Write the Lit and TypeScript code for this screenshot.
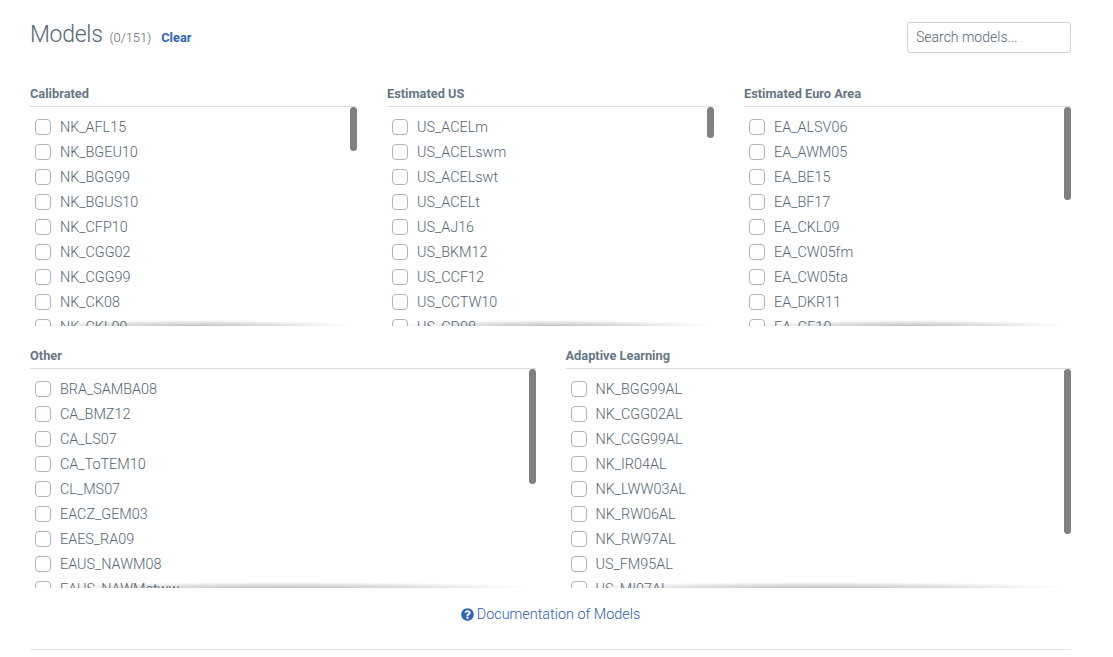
import { LitElement, html, css } from "lit";
import { customElement, property } from "lit/decorators.js";

interface Group {
  title: string;
  thumb: number;
  models: string[];
}

const TOP: Group[] = [
  { title: "Calibrated", thumb: 44, models: ["NK_AFL15", "NK_BGEU10", "NK_BGG99", "NK_BGUS10", "NK_CFP10", "NK_CGG02", "NK_CGG99", "NK_CK08", "NK_CKL09"] },
  { title: "Estimated US", thumb: 31, models: ["US_ACELm", "US_ACELswm", "US_ACELswt", "US_ACELt", "US_AJ16", "US_BKM12", "US_CCF12", "US_CCTW10", "US_CD08"] },
  { title: "Estimated Euro Area", thumb: 93, models: ["EA_ALSV06", "EA_AWM05", "EA_BE15", "EA_BF17", "EA_CKL09", "EA_CW05fm", "EA_CW05ta", "EA_DKR11", "EA_GE10"] },
];

const BOTTOM: Group[] = [
  { title: "Other", thumb: 115, models: ["BRA_SAMBA08", "CA_BMZ12", "CA_LS07", "CA_ToTEM10", "CL_MS07", "EACZ_GEM03", "EAES_RA09", "EAUS_NAWM08", "EAUS_NAWMctww"] },
  { title: "Adaptive Learning", thumb: 165, models: ["NK_BGG99AL", "NK_CGG02AL", "NK_CGG99AL", "NK_IR04AL", "NK_LWW03AL", "NK_RW06AL", "NK_RW97AL", "US_FM95AL", "US_MI07AL"] },
];

@customElement("model-group")
export class ModelGroup extends LitElement {
  @property({ attribute: false }) group!: Group;

  static styles = css`
    :host { display: block; min-width: 0; }
    .title { margin: 0; height: 24px; line-height: 24px; font-size: 12.8px; font-weight: 700; color: #667684; border-bottom: 1px solid #dcdddf; }
    .scroller { position: relative; height: 219px; overflow: hidden; }
    .list { list-style: none; margin: 0; padding: 8px 0 0 5px; }
    .row { display: flex; align-items: center; height: 25px; gap: 9px; line-height: 25px; white-space: nowrap; }
    .box { appearance: none; box-sizing: border-box; width: 16px; height: 16px; margin: 0 0 1px; border: 1px solid #adb5bd; border-radius: 4px; background: #fff; }
    .thumb { position: absolute; top: 0; right: 0; width: 7px; border-radius: 4px; background: #808080; }
    .shade { position: absolute; left: 0; right: 0; bottom: 0; height: 6px; background: radial-gradient(farthest-side at 50% 100%, rgba(0, 0, 0, 0.25), rgba(0, 0, 0, 0)); }
  `;

  render() {
    return html`
      <h2 class="title">${this.group.title}</h2>
      <div class="scroller">
        <ul class="list">
          ${this.group.models.map((m) => html`<li><label class="row"><input class="box" type="checkbox" />${m}</label></li>`)}
        </ul>
        <div class="shade"></div>
        <div class="thumb" style="height:${this.group.thumb}px"></div>
      </div>
    `;
  }
}

@customElement("app-root")
export class AppRoot extends LitElement {
  static styles = css`
    :host { display: block; box-sizing: border-box; height: 657px; overflow: hidden; padding: 22px 42px 0 30px; background: #fff; color: #566673; font: 300 14.4px Roboto, sans-serif; }
    .header { display: flex; justify-content: space-between; align-items: flex-start; height: 60px; }
    .heading { display: flex; align-items: baseline; margin: 0; line-height: 25px; font-size: 23px; font-weight: 300; letter-spacing: -0.3px; }
    .count { margin-left: 7px; font-size: 12.8px; letter-spacing: 0; }
    .clear { margin-left: 10px; font-size: 12.8px; font-weight: 700; letter-spacing: 0; color: #3166b5; text-decoration: none; }
    .search { box-sizing: border-box; width: 164px; height: 31px; padding: 0 8px 2px; border: 1px solid #ced4da; border-radius: 3px; font: inherit; font-size: 14px; color: inherit; }
    .search::placeholder { color: #566673; opacity: 1; }
    .grid { display: grid; column-gap: 30px; height: 262px; }
    .three { grid-template-columns: repeat(3, 1fr); }
    .two { grid-template-columns: repeat(2, 1fr); }
    .footer { display: flex; justify-content: center; height: 43px; border-bottom: 1px solid #e2e3e4; }
    .docs { display: flex; align-items: center; gap: 3px; height: 16px; font-size: 14.4px; color: #2c5fae; text-decoration: none; }
    .icon { width: 13px; height: 13px; color: #3166b5; }
  `;

  render() {
    return html`
      <header class="header">
        <h1 class="heading">Models <span class="count">(0/151)</span><a class="clear" href="#">Clear</a></h1>
        <input class="search" type="text" placeholder="Search models..." />
      </header>
      <section class="grid three">${TOP.map((g) => html`<model-group .group=${g}></model-group>`)}</section>
      <section class="grid two">${BOTTOM.map((g) => html`<model-group .group=${g}></model-group>`)}</section>
      <footer class="footer">
        <a class="docs" href="#">
          <svg class="icon" viewBox="0 0 512 512" fill="currentColor"><path d="M504 256c0 136.997-111.043 248-248 248S8 392.997 8 256C8 119.083 119.043 8 256 8s248 111.083 248 248zM262.655 90c-54.497 0-89.255 22.957-116.549 63.758-3.536 5.286-2.353 12.415 2.715 16.258l34.699 26.31c5.205 3.947 12.621 3.008 16.665-2.122 17.864-22.658 30.113-35.797 57.303-35.797 20.429 0 45.698 13.148 45.698 32.958 0 14.976-12.363 22.667-32.534 33.976C247.128 238.528 216 254.941 216 296v4c0 6.627 5.373 12 12 12h56c6.627 0 12-5.373 12-12v-1.333c0-28.462 83.186-29.647 83.186-106.667 0-58.002-60.165-102-116.531-102zM256 338c-25.365 0-46 20.635-46 46 0 25.364 20.635 46 46 46s46-20.636 46-46c0-25.365-20.635-46-46-46z" /></svg>
          <span>Documentation of Models</span>
        </a>
      </footer>
    `;
  }
}
